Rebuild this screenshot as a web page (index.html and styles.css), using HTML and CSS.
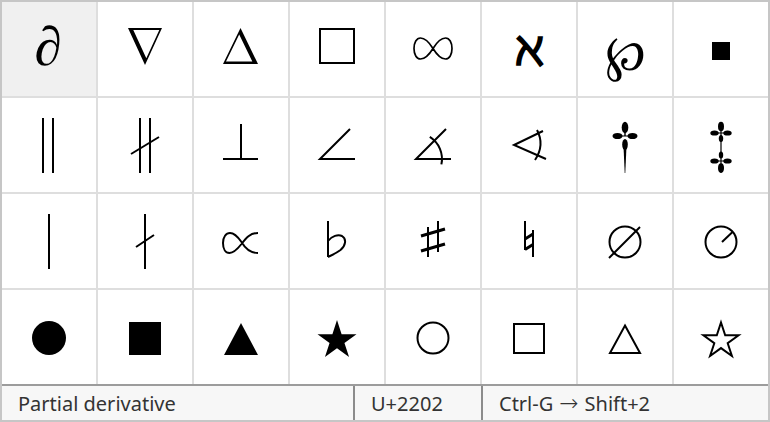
FILE: index.html
```html
<!DOCTYPE html>
<html lang="en">
<head>
  <meta charset="UTF-8" />
  <title>Symbol picker</title>
  <link rel="stylesheet" href="styles.css">
</head>
<body>
  <div class="picker">
    <div class="grid">
      <!-- row 1 -->
      <div class="cell selected"><svg viewBox="0 0 94 94"><text x="46" y="63" class="partial">∂</text></svg></div>
      <div class="cell"><svg viewBox="0 0 94 94"><path fill-rule="evenodd" d="M30 26H64L47 63ZM35.3 28H61.3L48.3 56.3Z"/></svg></div>
      <div class="cell"><svg viewBox="0 0 94 94"><path fill-rule="evenodd" d="M46.5 26L64 62H29ZM45.2 32.4L58.3 59.5H32Z"/></svg></div>
      <div class="cell"><svg viewBox="0 0 94 94"><rect x="30" y="27" width="34" height="34" class="line"/></svg></div>
      <div class="cell"><svg viewBox="0 0 94 94"><path class="thin" d="M47 46.5C51 40 55 36 59.5 36C63.5 36 66 40.5 66 46.5C66 52.5 63.5 57 59.5 57C55 57 51 53 47 46.5C43 40 39 36 34.5 36C30.5 36 28 40.5 28 46.5C28 52.5 30.5 57 34.5 57C39 57 43 53 47 46.5Z"/></svg></div>
      <div class="cell"><svg viewBox="0 0 94 94"><text x="47" y="63" class="alef">ℵ</text></svg></div>
      <div class="cell"><svg viewBox="0 0 94 94"><text x="47" y="68" class="weier">℘</text></svg></div>
      <div class="cell"><svg viewBox="0 0 94 94"><rect x="38" y="40" width="18" height="18"/></svg></div>

      <!-- row 2 -->
      <div class="cell"><svg viewBox="0 0 94 94"><path class="line" d="M41 20V75M51 20V75"/></svg></div>
      <div class="cell"><svg viewBox="0 0 94 94"><path class="line" d="M42 20V75M52 20V75M33 56L61 39"/></svg></div>
      <div class="cell"><svg viewBox="0 0 94 94"><path class="line" d="M47 26V61M29 61H64"/></svg></div>
      <div class="cell"><svg viewBox="0 0 94 94"><path class="line" d="M60 31L30 61H65"/></svg></div>
      <div class="cell"><svg viewBox="0 0 94 94"><path class="line" d="M60 31L30 61H65M43.8 38.9A26 26 0 0 1 55.4 66.4"/></svg></div>
      <div class="cell"><svg viewBox="0 0 94 94"><path class="line" d="M61 33L32 47L64 61M55 32Q63 47 53 62"/></svg></div>
      <div class="cell">
        <svg viewBox="0 0 94 94">
          <path d="M46.3 24h1.4v14h-1.4zM35 37.4h23v1.2H35z"/>
          <ellipse cx="47" cy="29.5" rx="3.3" ry="5.8"/>
          <ellipse cx="39.5" cy="38" rx="5" ry="3.1"/>
          <ellipse cx="54.5" cy="38" rx="5" ry="3.1"/>
          <ellipse cx="47" cy="46.5" rx="2.8" ry="5.5"/>
          <path d="M45.4 46L48.6 46L47.3 75L46.7 75Z"/>
        </svg>
      </div>
      <div class="cell">
        <svg viewBox="0 0 94 94">
          <path d="M46.4 24h1.2v51h-1.2zM37 34.4h19v1.2H37zM37 62.4h19v1.2H37z"/>
          <ellipse cx="47" cy="28.5" rx="3" ry="4.8"/>
          <ellipse cx="40.5" cy="35" rx="4.2" ry="2.6"/>
          <ellipse cx="53.5" cy="35" rx="4.2" ry="2.6"/>
          <ellipse cx="47" cy="40.5" rx="2.2" ry="3.6"/>
          <ellipse cx="47" cy="57" rx="2.2" ry="3.6"/>
          <ellipse cx="40.5" cy="63" rx="4.2" ry="2.6"/>
          <ellipse cx="53.5" cy="63" rx="4.2" ry="2.6"/>
          <ellipse cx="47" cy="70" rx="3" ry="4.8"/>
        </svg>
      </div>

      <!-- row 3 -->
      <div class="cell"><svg viewBox="0 0 94 94"><path class="line" d="M47 20V75"/></svg></div>
      <div class="cell"><svg viewBox="0 0 94 94"><path class="line" d="M47 20V75M38 53L56 41"/></svg></div>
      <div class="cell"><svg viewBox="0 0 94 94"><path class="line" d="M64 39C56 39 52 44 47.5 50C43.5 55 40 59 35.5 59C31.5 59 29 55 29 49C29 43 32 39 36 39C40 39 44 43 47.5 48C51 54 56 59 64 59"/></svg></div>
      <div class="cell"><svg viewBox="0 0 94 94"><path class="line" d="M38 27V63M38 47C42 42 48 40 52 42C57 45 55.5 52 50.5 56C46.5 59 42 61 38 63"/></svg></div>
      <div class="cell">
        <svg viewBox="0 0 94 94">
          <path class="line" d="M42 33V63M52 27V58"/>
          <path class="bar" d="M35 42L59 35M35 57L59 50"/>
        </svg>
      </div>
      <div class="cell">
        <svg viewBox="0 0 94 94">
          <path class="line" d="M43 27V56M51 36V63"/>
          <path class="bar" d="M43 45L51 40M43 55.5L51 50.5"/>
        </svg>
      </div>
      <div class="cell"><svg viewBox="0 0 94 94"><circle class="line" cx="47" cy="48" r="15.5"/><path class="line" d="M31 64L62 33"/></svg></div>
      <div class="cell"><svg viewBox="0 0 94 94"><circle class="line" cx="47" cy="48" r="15.5"/><path class="line" d="M48 48L58.5 38"/></svg></div>

      <!-- row 4 -->
      <div class="cell"><svg viewBox="0 0 94 94"><circle cx="47" cy="48" r="17"/></svg></div>
      <div class="cell"><svg viewBox="0 0 94 94"><rect x="31" y="32" width="32" height="33"/></svg></div>
      <div class="cell"><svg viewBox="0 0 94 94"><polygon points="47,33 64,65 30,65"/></svg></div>
      <div class="cell"><svg viewBox="0 0 94 94"><polygon points="47,30 51.6,44.2 66.5,44.2 54.45,52.9 59.05,67.1 47,58.3 34.95,67.1 39.55,52.9 27.5,44.2 42.4,44.2"/></svg></div>
      <div class="cell"><svg viewBox="0 0 94 94"><circle class="line" cx="47" cy="48" r="15.5"/></svg></div>
      <div class="cell"><svg viewBox="0 0 94 94"><rect class="line" x="32" y="34" width="30" height="29"/></svg></div>
      <div class="cell"><svg viewBox="0 0 94 94"><polygon class="line" points="47,35.5 62,63 32,63"/></svg></div>
      <div class="cell"><svg viewBox="0 0 94 94"><polygon class="line" points="47,32.5 51.2,45.3 64.6,45.3 53.7,53.2 57.9,66 47,58.1 36.1,66 40.3,53.2 29.4,45.3 42.8,45.3"/></svg></div>
    </div>
    <div class="status">
      <div class="status-name">Partial derivative</div>
      <div class="status-code">U+2202</div>
      <div class="status-keys">Ctrl-G <span class="arrow">→</span> Shift+2</div>
    </div>
  </div>
</body>
</html>
```

FILE: styles.css
```css
body {
  margin: 0;
  background-color: #fff;
}
.picker {
  width: 766px;
  border: 2px solid #c6c6c6;
}
.grid {
  display: grid;
  grid-template-columns: repeat(8, 94px);
  grid-auto-rows: 94px;
  gap: 2px;
  background-color: #dedede;
}
.cell {
  display: flex;
  align-items: center;
  justify-content: center;
  background-color: #fff;
}
.cell.selected {
  background-color: #f0f0f0;
}
.cell svg {
  width: 94px;
  height: 94px;
  fill: #000;
}
.cell svg .line {
  fill: none;
  stroke: #000;
  stroke-width: 2;
}
.cell svg .thin {
  fill: none;
  stroke: #000;
  stroke-width: 1.7;
}
.cell svg .bar {
  fill: none;
  stroke: #000;
  stroke-width: 3;
}
.cell text {
  text-anchor: middle;
  font-family: 'Liberation Serif', 'DejaVu Serif', serif;
}
.partial {
  font-style: italic;
  font-size: 55px;
}
.alef {
  font-family: 'DejaVu Serif', serif;
  font-weight: bold;
  font-size: 48px;
}
.weier {
  font-family: 'DejaVu Sans', sans-serif;
  font-size: 49px;
}
.status {
  display: flex;
  height: 34px;
  border-top: 2px solid #9c9c9c;
  background-color: #f7f7f7;
  font-family: 'Noto Sans', 'Open Sans', sans-serif;
  font-size: 20px;
  color: #333;
}
.status > div {
  display: flex;
  align-items: center;
  padding-left: 16px;
}
.status-name {
  width: 335px;
  border-right: 2px solid #8c8c8c;
}
.status-code {
  width: 110px;
  border-right: 2px solid #8c8c8c;
}
.status-keys {
  flex: 1;
  gap: 6px;
}
.arrow {
  font-family: 'DejaVu Sans', sans-serif;
  font-size: 23px;
  font-weight: 300;
}
```
